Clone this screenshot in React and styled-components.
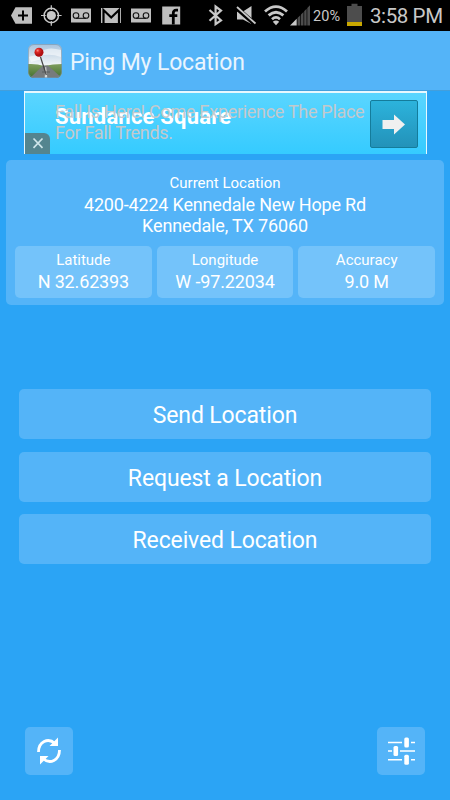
import React from 'react';
import styled, { createGlobalStyle } from 'styled-components';

const GlobalStyle = createGlobalStyle`
    body {
        margin: 0;
        background: #2ba4f5;
        overflow: hidden;
    }
    * {
        box-sizing: border-box;
    }
`;

const Screen = styled.div`
    display: flex;
    flex-direction: column;
    width: 450px;
    height: 800px;
    background: #2ba4f5;
    color: #fff;
    font-family: Roboto, "Liberation Sans", sans-serif;
`;

// Status bar
const StatusBar = styled.div`
    display: flex;
    justify-content: space-between;
    flex: none;
    height: 31px;
    padding: 0 7px 0 11px;
    background: #000;
    color: #c8c8c8;
`;
const StatusGroup = styled.div`
    display: flex;
    align-items: center;
    gap: ${props => props.$gap || 0}px;
`;
const StatusIcon = styled.svg`
    display: block;
    flex: none;
    width: ${props => props.$w}px;
    height: 31px;
    margin-right: ${props => props.$after || 0}px;
`;
const Percent = styled.div`
    width: 34px;
    padding-top: 2px;
    font-size: 14.5px;
    letter-spacing: 0.1px;
`;
const Clock = styled.div`
    width: 73px;
    padding-top: 1px;
    font-size: 20.5px;
    line-height: 30px;
    letter-spacing: -0.4px;
    white-space: nowrap;
`;

// Title bar
const Header = styled.div`
    display: flex;
    align-items: center;
    flex: none;
    height: 60px;
    padding: 0 0 0 28px;
    gap: 8px;
    background: #54b4f8;
    border-bottom: 1.5px solid #439fdc;
`;
const Title = styled.div`
    padding-top: 4px;
    font-size: 23px;
    letter-spacing: -0.15px;
    color: #e9f5fe;
`;

// Advert
const Ad = styled.div`
    position: relative;
    flex: none;
    width: 403px;
    height: 63px;
    margin: 0 0 6px 24px;
    border: solid #e8f8ff;
    border-width: 2px 1px 0;
    background: linear-gradient(#5ad5ff, #35cbff);
`;
const AdName = styled.div`
    position: absolute;
    left: 30px;
    top: 11px;
    font-size: 22px;
    line-height: 26px;
    font-weight: 700;
    letter-spacing: 0.2px;
`;
const AdText = styled.div`
    position: absolute;
    left: 30px;
    top: 8px;
    font-size: 18px;
    line-height: 21px;
    letter-spacing: -0.3px;
    white-space: nowrap;
    color: #c4c9cc;
`;
const AdClose = styled.div`
    position: absolute;
    left: 0;
    bottom: 0;
    display: flex;
    width: 25px;
    height: 21px;
    border-radius: 0 6px 0 0;
    background: #54858f;
`;
const AdArrow = styled.div`
    position: absolute;
    right: 8px;
    top: 7px;
    display: flex;
    width: 48px;
    height: 48px;
    border: 1px solid #147c9b;
    border-radius: 2px;
    background: linear-gradient(#2cb3dc, #2392b9);
`;

// Location card
const Card = styled.div`
    flex: none;
    width: 438px;
    height: 145px;
    margin-left: 6px;
    padding: 13px 9px 0;
    border-radius: 5px;
    background: #54b4f8;
    text-align: center;
`;
const Label = styled.div`
    font-size: 15px;
    line-height: 20px;
`;
const Value = styled.div`
    padding-top: ${props => props.$top || 0}px;
    font-size: 18px;
    line-height: 20.5px;
    letter-spacing: ${props => props.$spacing || 0}px;
`;
const Cells = styled.div`
    display: flex;
    gap: 5px;
    margin-top: 9.5px;
`;
const Cell = styled.div`
    flex: 1;
    height: 52px;
    padding-top: 4px;
    border-radius: 5px;
    background: #74c3fa;
`;

// Actions
const Actions = styled.div`
    display: flex;
    flex-direction: column;
    gap: 12.5px;
    margin: 84px 19px 0;
`;
const Action = styled.div`
    height: 50px;
    padding-top: 2px;
    border-radius: 5px;
    background: #54b4f8;
    font-size: 23px;
    line-height: 50px;
    letter-spacing: -0.13px;
    text-align: center;
`;
const Footer = styled.div`
    display: flex;
    justify-content: space-between;
    margin-top: auto;
    padding: 0 25px 25px;
`;
const IconButton = styled.div`
    width: 48px;
    height: 48px;
    border-radius: 5px;
    background: #54b4f8;
`;

const Voicemail = () => (
  <StatusIcon $w={20} viewBox="0 0 20 31">
    <rect y="8.5" width="20" height="14" fill="#bebebe" />
    <g fill="none" stroke="#111" strokeWidth="1.1">
      <circle cx="5" cy="15.5" r="2.8" />
      <circle cx="15" cy="15.5" r="2.8" />
      <path d="M5 18.3H15" />
    </g>
  </StatusIcon>
);

const Notifications = () => (
  <StatusGroup $gap={10}>
    <StatusIcon $w={21} $after={-1} viewBox="0 0 21 31">
      <path d="M0 15.5L4.5 7.3H21V23.7H4.5Z" fill="#bebebe" />
      <path d="M7 15.5H17M12 10.5V20.5" stroke="#000" strokeWidth="2" />
    </StatusIcon>
    <StatusIcon $w={21} $after={-1} viewBox="0 0 21 31">
      <g fill="none" stroke="#c8c8c8">
        <circle cx="10.3" cy="15.5" r="7.2" strokeWidth="1.5" />
        <path d="M10.3 5.2V10M10.3 21V25.8M0 15.5H5M15.6 15.5H20.6" strokeWidth="1.2" />
      </g>
      <circle cx="10.3" cy="15.5" r="5.6" fill="#000" />
      <circle cx="10.3" cy="15.5" r="4.6" fill="#c8c8c8" />
    </StatusIcon>
    <Voicemail />
    <StatusIcon $w={20} viewBox="0 0 20 31">
      <rect y="8" width="20" height="15" fill="#bebebe" />
      <path d="M2.5 23V10L10.2 17.5L18 10V23" fill="none" stroke="#000" strokeWidth="2.2" />
    </StatusIcon>
    <Voicemail />
    <StatusIcon $w={20} viewBox="0 0 20 31">
      <rect x="1.2" y="6.5" width="18" height="18" fill="#bebebe" />
      <path d="M17 10.2H15.2Q12.3 10.2 12.3 13V24.6M8.3 15.6H16.3" fill="none" stroke="#000" strokeWidth="2.8" />
    </StatusIcon>
  </StatusGroup>
);

const System = () => (
  <StatusGroup>
    <StatusIcon $w={16} $after={12} viewBox="0 0 16 31">
      <path d="M1.5 10L13 20.3L7.6 24.2V6.5L13 10.5L1.5 20.8" fill="none" stroke="#c8c8c8" strokeWidth="2.2" />
    </StatusIcon>
    <StatusIcon $w={21} $after={7.5} viewBox="0 0 21 31">
      <path d="M1 11.5H7L15.5 6V24L7 19.5H1Z" fill="#c8c8c8" />
      <path d="M0 7.5L20 25" stroke="#000" strokeWidth="4.5" />
      <path d="M1 7L19.5 23.5" stroke="#c8c8c8" strokeWidth="1.8" />
    </StatusIcon>
    <StatusIcon $w={24} $after={2} viewBox="0 0 24 31">
      <g fill="none" stroke="#c8c8c8" strokeWidth="2.8">
        <path d="M1 11.5Q12 1.8 23 11.5" />
        <path d="M4.6 15.4Q12 9 19.4 15.4" />
        <path d="M8 19.2Q12 15.6 16 19.2" />
      </g>
      <path d="M8.8 21.7Q12 19.5 15.2 21.7L12 25.2Z" fill="#c8c8c8" />
    </StatusIcon>
    <StatusIcon $w={20} $after={3} viewBox="0 0 20 31">
      <path d="M0 25.5L6.7 18.8V25.5Z" fill="#c8c8c8" />
      <path d="M7.5 18L10.3 15.2V25.5H7.5ZM11 14.5L13.5 12V25.5H11ZM14.2 11.2L16.6 8.8V25.5H14.2ZM17.3 8L20 5.3V25.5H17.3Z" fill="#4d4d4d" />
    </StatusIcon>
    <Percent>20%</Percent>
    <StatusIcon $w={15} $after={8} viewBox="0 0 15 31">
      <path d="M0 6H4.5V3.7H10.5V6H15V22H0Z" fill="#4d4d4d" />
      <rect y="22" width="15" height="4" fill="#c9a800" />
    </StatusIcon>
    <Clock>3:58 PM</Clock>
  </StatusGroup>
);

const AppIcon = () => (
  <svg width="34" height="34" viewBox="0 0 34 34">
    <defs>
      <clipPath id="tile"><rect width="34" height="34" rx="6" /></clipPath>
      <linearGradient id="sky" x2="0" y2="1">
        <stop offset="0" stopColor="#a9c3dc" />
        <stop offset="0.6" stopColor="#eef3f6" />
      </linearGradient>
      <linearGradient id="grass" x2="0" y2="1">
        <stop offset="0" stopColor="#7f9e5f" />
        <stop offset="1" stopColor="#43702c" />
      </linearGradient>
      <radialGradient id="ball" cx="0.35" cy="0.3">
        <stop offset="0" stopColor="#ff8d85" />
        <stop offset="0.4" stopColor="#e02a26" />
        <stop offset="1" stopColor="#b01012" />
      </radialGradient>
    </defs>
    <g clipPath="url(#tile)">
      <rect width="34" height="34" fill="url(#sky)" />
      <path d="M12 8Q20 2 33 6V13Q22 9 12 12ZM1 13Q8 9 14 15L3 18Z" fill="#fff" opacity="0.55" />
      <path d="M0 20Q9 19.5 16 22Q25 20 34 20V34H0Z" fill="url(#grass)" />
      <path d="M15 21.5H20L34 34H2Z" fill="#777b7c" />
      <path d="M17.3 23L16.7 34H19.3L18.2 23Z" fill="#d7d9d8" />
      <path d="M12.5 13L18.3 31" stroke="#444" strokeWidth="1.2" />
      <path d="M14 28H22" stroke="#5a5e5f" />
      <circle cx="11" cy="8.3" r="4.5" fill="url(#ball)" />
    </g>
    <rect x="0.5" y="0.5" width="33" height="33" rx="5.5" fill="none" stroke="#6f93ad" opacity="0.6" />
  </svg>
);

const LocationCell = props => (
  <Cell>
    <Label>{props.label}</Label>
    <Value $top={2} $spacing={-0.15}>{props.value}</Value>
  </Cell>
);

const App = () => {
  return (
    <>
      <GlobalStyle />
      <Screen>
        <StatusBar>
          <Notifications />
          <System />
        </StatusBar>

        <Header>
          <AppIcon />
          <Title>Ping My Location</Title>
        </Header>

        <Ad>
          <AdName>Sundance Square</AdName>
          <AdText>Fall Is Here! Come Experience The Place<br />For Fall Trends.</AdText>
          <AdClose>
            <svg width="25" height="21" viewBox="0 0 25 21">
              <path d="M8.5 5.5L17.5 14.8M17.5 5.5L8.5 14.8" stroke="#cfe6ea" strokeWidth="1.7" />
            </svg>
          </AdClose>
          <AdArrow>
            <svg width="46" height="46" viewBox="0 0 46 46">
              <path d="M11.5 19H23V13.5L34 23.5L23 33.5V28H11.5Z" fill="#f0f0f0" />
            </svg>
          </AdArrow>
        </Ad>

        <Card>
          <Label>Current Location</Label>
          <Value $top={2} $spacing={-0.18}>4200-4224 Kennedale New Hope Rd</Value>
          <Value $spacing={-0.15}>Kennedale, TX 76060</Value>
          <Cells>
            <LocationCell label="Latitude" value="N 32.62393" />
            <LocationCell label="Longitude" value="W -97.22034" />
            <LocationCell label="Accuracy" value="9.0 M" />
          </Cells>
        </Card>

        <Actions>
          <Action>Send Location</Action>
          <Action>Request a Location</Action>
          <Action>Received Location</Action>
        </Actions>

        <Footer>
          <IconButton>
            <svg width="48" height="48" viewBox="0 0 48 48">
              <g fill="none" stroke="#fff" strokeWidth="2.8">
                <path d="M13.5 25C13.5 15 23 10 30 16.5" />
                <path d="M34.5 23C34.5 33 25 38 18 31.5" />
              </g>
              <path d="M33 10.5V19H24.5ZM15 37.5V29H23.5Z" fill="#fff" />
            </svg>
          </IconButton>
          <IconButton>
            <svg width="48" height="48" viewBox="0 0 48 48">
              <path d="M11 15.5H25M34 15.5H38M11 24H15M23 24H38M11 32.7H25M34 32.7H38" stroke="#fff" strokeWidth="1.6" />
              <g fill="#fff">
                <rect x="27.3" y="10.5" width="4.6" height="10" rx="1.5" />
                <rect x="16.5" y="19" width="4.6" height="10" rx="1.5" />
                <rect x="27.3" y="27.7" width="4.6" height="10" rx="1.5" />
              </g>
            </svg>
          </IconButton>
        </Footer>
      </Screen>
    </>
  );
};

export default App;
